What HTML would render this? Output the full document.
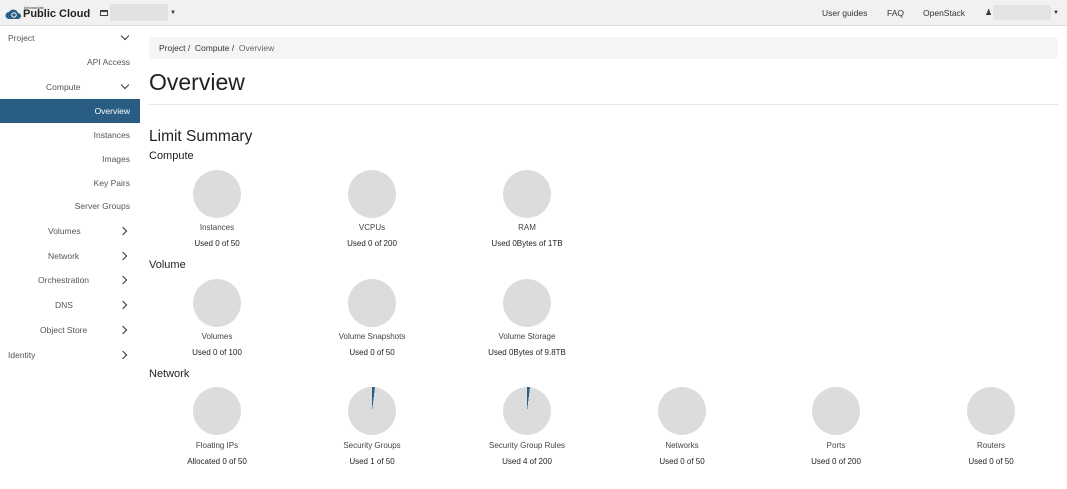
<!DOCTYPE html><html><head><style>
*{margin:0;padding:0;box-sizing:border-box}
body{width:1067px;height:489px;overflow:hidden;background:#fff;font-family:"Liberation Sans",sans-serif;color:#333;position:relative}
.hdr{position:absolute;left:0;top:0;width:1067px;height:26px;background:#f1f1f1;border-bottom:1px solid #ddd}
.a{position:absolute;white-space:nowrap}
.sb{font-size:8.5px;color:#555}
.chev{position:absolute;width:6px;height:6px;border-right:1.6px solid #333;border-bottom:1.6px solid #333}
.pie{position:absolute;width:48px;height:48px;border-radius:50%;background:#dcdcdc}
.lb{position:absolute;width:150px;text-align:center;font-size:8px;color:#444}
.ub{position:absolute;width:150px;text-align:center;font-size:8px;color:#222}
</style></head><body>
<div class="hdr"></div>
<svg class="a" style="left:5px;top:8px" width="17" height="12" viewBox="0 0 17 12"><path d="M4 11a3.5 3.5 0 0 1 0-7a5 5 0 0 1 9 1a3 3 0 0 1 0 6z" fill="#2a5d84"/><circle cx="9" cy="7" r="2.2" fill="none" stroke="#fff" stroke-width="1"/></svg>
<div class="a" style="left:24px;top:5px;font-size:4px;color:#333">Infomaniak</div>
<div class="a" style="left:23px;top:8px;font-size:11px;font-weight:bold;color:#222">Public Cloud</div>
<div class="a" style="left:100px;top:10px;width:8px;height:6px;border:1.2px solid #444;border-top-width:2px"></div>
<div class="a" style="left:110px;top:4px;width:58px;height:17px;background:#ddd;opacity:.8"></div>
<div class="a" style="left:170px;top:10px;font-size:6px">▼</div>
<div class="a" style="left:822px;top:8px;font-size:8.5px">User guides</div>
<div class="a" style="left:887px;top:8px;font-size:8.5px">FAQ</div>
<div class="a" style="left:923px;top:8px;font-size:8.5px">OpenStack</div>
<div class="a" style="left:985px;top:8px;font-size:8px">&#9823;</div>
<div class="a" style="left:993px;top:5px;width:58px;height:15px;background:#e4e4e4"></div>
<div class="a" style="left:1053px;top:10px;font-size:6px">▼</div>
<div class="a" style="left:0;top:99px;width:140px;height:24px;background:#2a5d84"></div>
<div class="a sb" style="left:8px;top:33px">Project</div><div class="chev" style="left:122px;top:33px;transform:rotate(45deg)"></div>
<div class="a sb" style="right:937px;top:57px">API Access</div>
<div class="a sb" style="left:46px;top:82px">Compute</div><div class="chev" style="left:122px;top:82px;transform:rotate(45deg)"></div>
<div class="a sb" style="right:937px;top:106px;color:#fff">Overview</div>
<div class="a sb" style="right:937px;top:130px">Instances</div>
<div class="a sb" style="right:937px;top:154px">Images</div>
<div class="a sb" style="right:937px;top:178px">Key Pairs</div>
<div class="a sb" style="right:937px;top:201px">Server Groups</div>
<div class="a sb" style="left:48px;top:226px">Volumes</div><div class="chev" style="left:120px;top:228px;transform:rotate(-45deg)"></div>
<div class="a sb" style="left:48px;top:251px">Network</div><div class="chev" style="left:120px;top:253px;transform:rotate(-45deg)"></div>
<div class="a sb" style="left:38px;top:275px">Orchestration</div><div class="chev" style="left:120px;top:277px;transform:rotate(-45deg)"></div>
<div class="a sb" style="left:55px;top:300px">DNS</div><div class="chev" style="left:120px;top:302px;transform:rotate(-45deg)"></div>
<div class="a sb" style="left:40px;top:325px">Object Store</div><div class="chev" style="left:120px;top:327px;transform:rotate(-45deg)"></div>
<div class="a sb" style="left:8px;top:350px">Identity</div><div class="chev" style="left:120px;top:352px;transform:rotate(-45deg)"></div>
<div class="a" style="left:149px;top:37px;width:909px;height:22px;background:#f5f5f5;border-radius:4px"></div>
<div class="a" style="left:159px;top:43px;font-size:8.5px;color:#333">Project&nbsp;/&nbsp;&nbsp;Compute&nbsp;/&nbsp;&nbsp;<span style="color:#666">Overview</span></div>
<div class="a" style="left:149px;top:69px;font-size:23px;color:#222">Overview</div>
<div class="a" style="left:149px;top:104px;width:909px;height:1px;background:#e5e5e5"></div>
<div class="a" style="left:149px;top:128px;font-size:15.5px;color:#222">Limit Summary</div>
<div class="a" style="left:149px;top:150px;font-size:11px;color:#222">Compute</div>
<div class="a" style="left:149px;top:259px;font-size:11px;color:#222">Volume</div>
<div class="a" style="left:149px;top:368px;font-size:11px;color:#222">Network</div>
<div class="pie" style="left:193px;top:170px"></div><div class="lb" style="left:142px;top:223px">Instances</div><div class="ub" style="left:142px;top:239px">Used 0 of 50</div>
<div class="pie" style="left:348px;top:170px"></div><div class="lb" style="left:297px;top:223px">VCPUs</div><div class="ub" style="left:297px;top:239px">Used 0 of 200</div>
<div class="pie" style="left:503px;top:170px"></div><div class="lb" style="left:452px;top:223px">RAM</div><div class="ub" style="left:452px;top:239px">Used 0Bytes of 1TB</div>
<div class="pie" style="left:193px;top:279px"></div><div class="lb" style="left:142px;top:332px">Volumes</div><div class="ub" style="left:142px;top:348px">Used 0 of 100</div>
<div class="pie" style="left:348px;top:279px"></div><div class="lb" style="left:297px;top:332px">Volume Snapshots</div><div class="ub" style="left:297px;top:348px">Used 0 of 50</div>
<div class="pie" style="left:503px;top:279px"></div><div class="lb" style="left:452px;top:332px">Volume Storage</div><div class="ub" style="left:452px;top:348px">Used 0Bytes of 9.8TB</div>
<div class="pie" style="left:193px;top:387px"></div><div class="lb" style="left:142px;top:441px">Floating IPs</div><div class="ub" style="left:142px;top:457px">Allocated 0 of 50</div>
<div class="pie" style="left:348px;top:387px;background:conic-gradient(#2a5d84 0 7.2deg,#dcdcdc 7.2deg)"></div><div class="lb" style="left:297px;top:441px">Security Groups</div><div class="ub" style="left:297px;top:457px">Used 1 of 50</div>
<div class="pie" style="left:503px;top:387px;background:conic-gradient(#2a5d84 0 7.2deg,#dcdcdc 7.2deg)"></div><div class="lb" style="left:452px;top:441px">Security Group Rules</div><div class="ub" style="left:452px;top:457px">Used 4 of 200</div>
<div class="pie" style="left:658px;top:387px"></div><div class="lb" style="left:607px;top:441px">Networks</div><div class="ub" style="left:607px;top:457px">Used 0 of 50</div>
<div class="pie" style="left:812px;top:387px"></div><div class="lb" style="left:761px;top:441px">Ports</div><div class="ub" style="left:761px;top:457px">Used 0 of 200</div>
<div class="pie" style="left:967px;top:387px"></div><div class="lb" style="left:916px;top:441px">Routers</div><div class="ub" style="left:916px;top:457px">Used 0 of 50</div>
</body></html>
